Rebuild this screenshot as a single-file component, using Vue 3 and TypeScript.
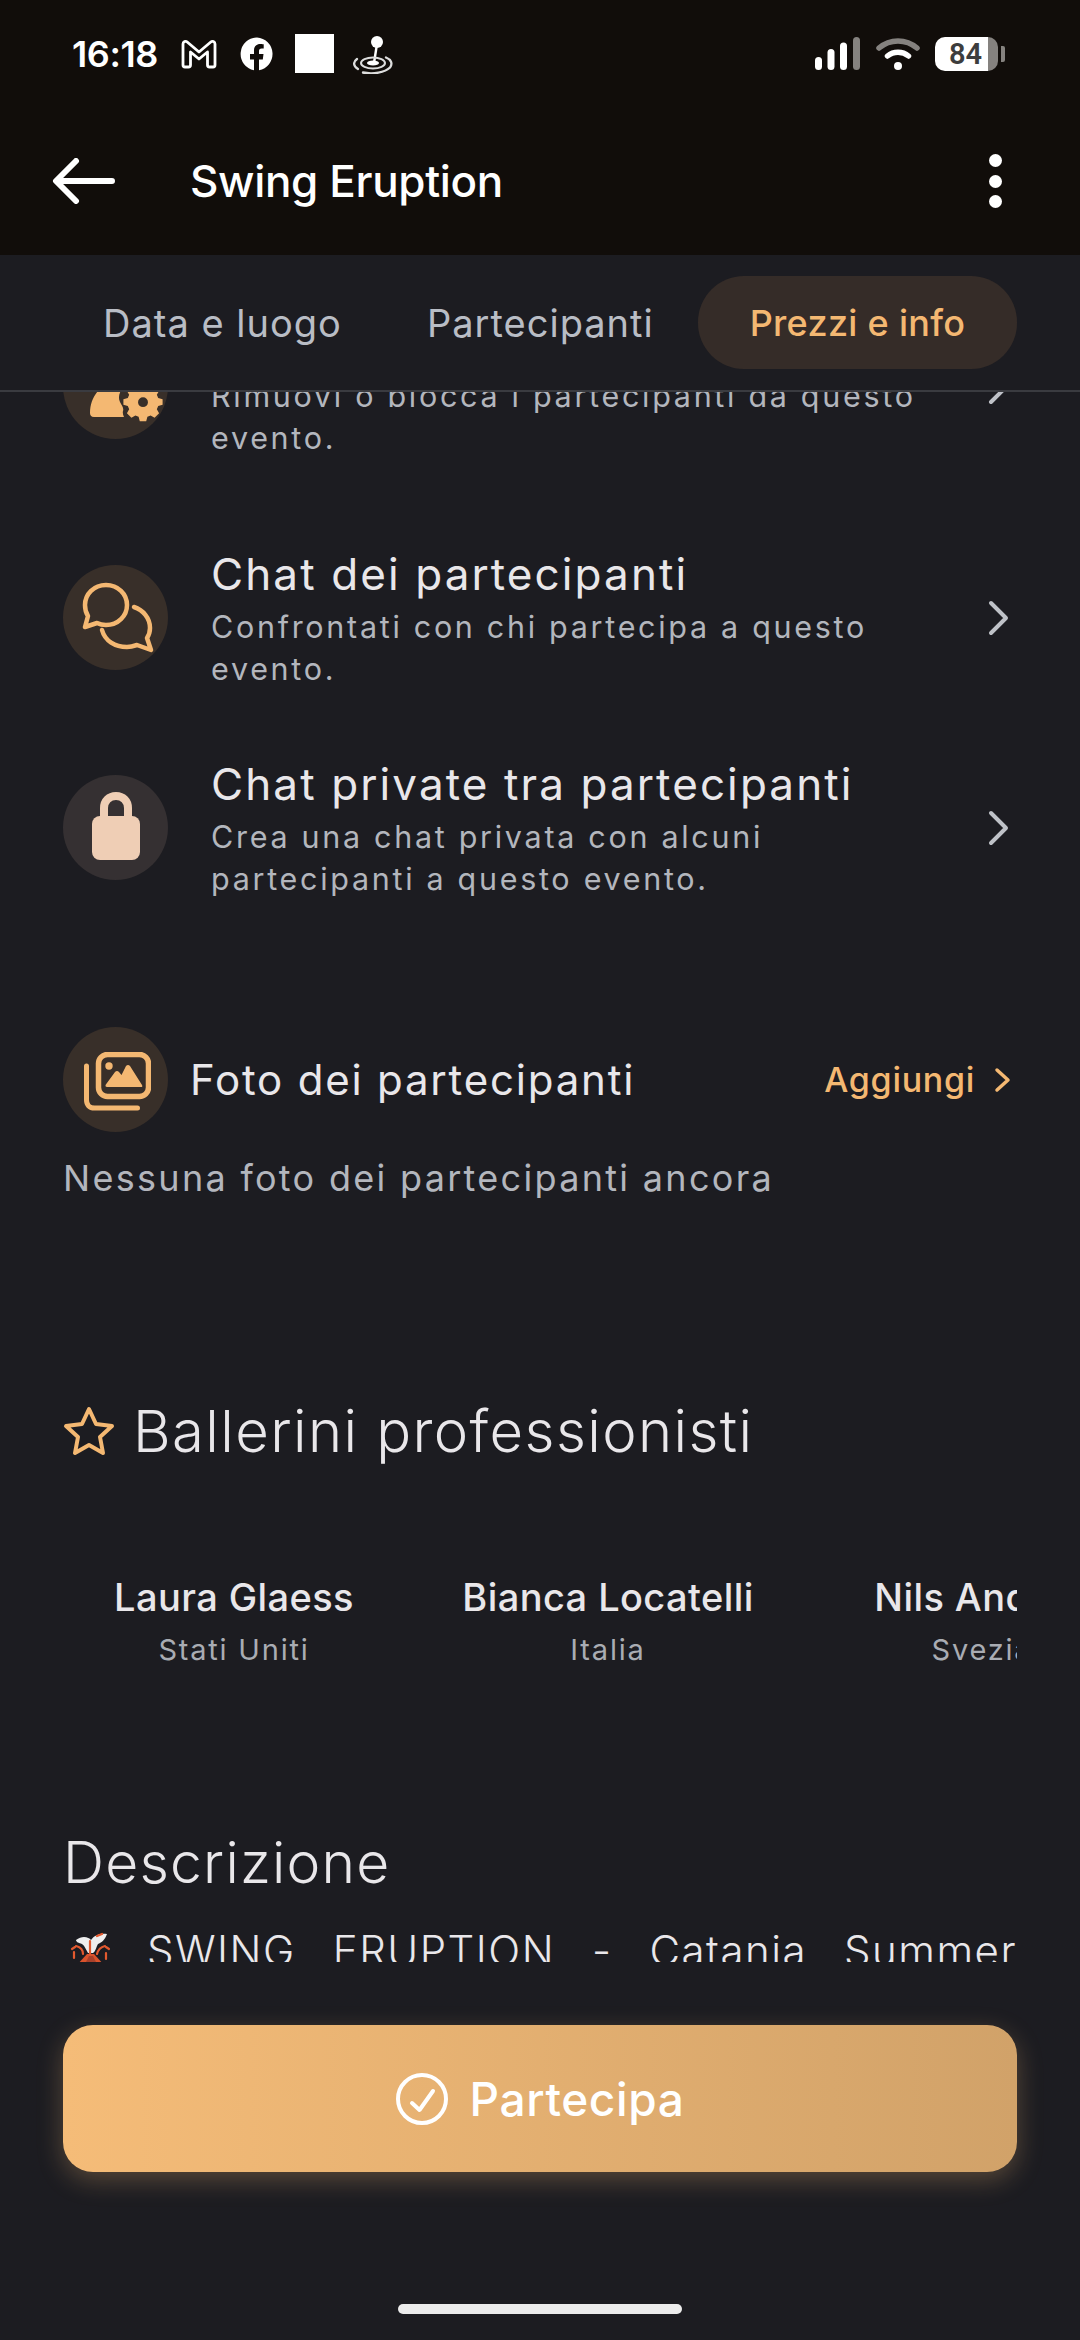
<script setup lang="ts">
interface Row { title: string; sub: string; kind: string }
const rows: Row[] = [
  { title: 'Chat dei partecipanti', sub: 'Confrontati con chi partecipa a questo evento.', kind: 'chat' },
  { title: 'Chat private tra partecipanti', sub: 'Crea una chat privata con alcuni partecipanti a questo evento.', kind: 'lock' }
]
const dancers = [
  { name: 'Laura Glaess', country: 'Stati Uniti' },
  { name: 'Bianca Locatelli', country: 'Italia' },
  { name: 'Nils Andrén', country: 'Svezia' }
]
</script>

<template>
  <div class="page">
    <header class="top">
      <div class="status">
        <span class="time">16:18</span>
        <svg class="si gm" viewBox="0 0 36 30"><path d="M2 26V5c0-2.500 2.600-3.400 4.200-2L18 13 29.800 3c1.600-1.400 4.200-.5 4.200 2v21c0 1-.8 2-2 2h-3.500c-1.200 0-2-1-2-2V13L18 20 9.500 13v13c0 1-.8 2-2 2H4c-1.200 0-2-1-2-2Z" fill="none" stroke="#fff" stroke-width="2.800" stroke-linejoin="round"/></svg>
        <svg class="si fb" viewBox="0 0 34 34"><path fill="#fff" d="M17 .5a16.500 16.500 0 0 0-3 32.700V22.500h-4v-5.500h4v-3.500c0-4.300 2.500-6.600 6.300-6.600 1.800 0 3.400.3 3.400.3v4.300h-2c-2 0-2.700 1.200-2.700 2.500v3h4.500l-.7 5.500h-3.800v10.700A16.500 16.500 0 0 0 17 .5Z"/></svg>
        <span class="sq"></span>
        <svg class="si joy" viewBox="0 0 40 40"><circle cx="24" cy="8" r="6" fill="#fff"/><path d="M23.500 13 21 29" stroke="#fff" stroke-width="2.400"/><ellipse cx="20" cy="29" rx="6" ry="2.600" fill="#fff"/><ellipse cx="20" cy="29" rx="12" ry="5.500" fill="none" stroke="#ddd" stroke-width="2"/><path d="M5 35c-5-3-5-7-1-10M10 38.500c10 2 22 0 27-5 3-4 1-8-4-10" fill="none" stroke="#ddd" stroke-width="2.300" stroke-linecap="round"/></svg>
        <span class="spacer"></span>
        <svg class="signal" viewBox="0 0 45 33">
          <rect x="0" y="20" width="7" height="13" rx="3.500" fill="#fff"/>
          <rect x="12.500" y="12" width="7" height="21" rx="3.500" fill="#fff"/>
          <rect x="25" y="5.500" width="7" height="27.500" rx="3.500" fill="#fff"/>
          <rect x="38" y="0" width="7" height="33" rx="3.500" fill="#85827f"/>
        </svg>
        <svg class="wifi" viewBox="0 0 44 33">
          <path d="M3 11C14 1.500 30 1.500 41 11" fill="none" stroke="#85827f" stroke-width="5.500" stroke-linecap="round"/>
          <path d="M11.500 19C17.500 14 26.500 14 32.500 19" fill="none" stroke="#fff" stroke-width="5.500" stroke-linecap="round"/>
          <circle cx="22" cy="29" r="4" fill="#fff"/>
        </svg>
        <div class="batt"><span class="batt-n">84</span></div>
        <span class="batt-tip"></span>
      </div>
      <div class="bar">
        <svg class="back" viewBox="0 0 63 46"><path d="M60 23H5M24 3 4 23l20 20" fill="none" stroke="#fff" stroke-width="6" stroke-linecap="round" stroke-linejoin="round"/></svg>
        <span class="bar-title">Swing Eruption</span>
        <span class="dots"><i></i><i></i><i></i></span>
      </div>
    </header>

    <nav class="tabs">
      <span class="tab t1">Data e luogo</span>
      <span class="tab t2">Partecipanti</span>
      <span class="tab on">Prezzi e info</span>
    </nav>

    <main class="scroll">
      <div class="content">
        <section class="row first">
          <span class="circle">
            <svg class="full" viewBox="0 0 105 105">
              <path fill="#f4b872" d="M31 83c-3 0-4-2-4-4 0-14 8-26 20-30h14l-2 6c-3 4-4 9-2 13 2 4 4 6 3 9-.5 2 0 4 1 6Z"/>
              <path fill="#f4b872" fill-rule="evenodd" d="M76 47h8l1.500 5.500 4 1.700 5-2.800 5.600 5.600-2.800 5 1.700 4 5.500 1.500v7l-5.500 1.500-1.700 4 2.800 5-5.600 5.600-5-2.800-4 1.700L84 95h-8l-1.500-5.500-4-1.700-5 2.800-5.600-5.600 2.800-5-1.700-4-5.500-1.500v-7l5.500-1.500 1.700-4-2.800-5 5.600-5.600 5 2.800 4-1.700ZM80 65a6.200 6.200 0 1 0 0 12.400A6.200 6.200 0 0 0 80 65Z" transform="translate(80 68) scale(.8) translate(-80 -71)"/>
            </svg>
          </span>
          <div class="texts">
            <div class="r-title">Gestisci partecipanti</div>
            <div class="r-sub">Rimuovi o blocca i partecipanti da questo evento.</div>
          </div>
          <svg class="chev" viewBox="0 0 24 36"><path d="m4 3 15 15L4 33" fill="none" stroke="#bfc2c8" stroke-width="4" stroke-linecap="round" stroke-linejoin="round"/></svg>
        </section>

        <section v-for="r in rows" :key="r.kind" class="row" :class="r.kind">
          <span class="circle" :class="{ grey: r.kind === 'lock' }">
            <svg v-if="r.kind === 'chat'" class="chat-ic" viewBox="0 0 72 72"><path d="M24 3c12 0 21 9 21 20s-9 20-21 20c-4 0-7-1-9-2L3 45l3-11c-2-3-3-7-3-11C3 12 12 3 24 3Z" fill="none" stroke="#f4b872" stroke-width="4.500" stroke-linejoin="round"/><path d="M52 25c9 3 16 11 16 21 0 4-1 7-3 10l4 12-14-5c-3 1-6 2-10 2-12 0-22-6-25-17" fill="none" stroke="#f4b872" stroke-width="4.500" stroke-linejoin="round" stroke-linecap="round"/></svg>
            <svg v-else class="lock-ic" viewBox="0 0 48 68"><path d="M12 28V16C12 9 17 4 24 4s12 5 12 12v12" fill="none" stroke="#efceb5" stroke-width="8"/><rect x="0" y="24" width="48" height="44" rx="8" fill="#efceb5"/></svg>
          </span>
          <div class="texts">
            <div class="r-title">{{ r.title }}</div>
            <div class="r-sub">{{ r.sub }}</div>
          </div>
          <svg class="chev" viewBox="0 0 24 36"><path d="m4 3 15 15L4 33" fill="none" stroke="#bfc2c8" stroke-width="4" stroke-linecap="round" stroke-linejoin="round"/></svg>
        </section>

        <section class="photos">
          <span class="circle">
            <svg class="pic-ic" viewBox="0 0 67 59">
              <rect x="14.500" y="2.500" width="50" height="42" rx="9" fill="none" stroke="#f4b872" stroke-width="5.500"/>
              <circle cx="25" cy="14" r="3.700" fill="#f4b872"/>
              <path fill="#f4b872" d="M21.500 33 31 20q2-2 4 0l2.500 3L42 14q2-2 4 0l12 19q1 2-1 2H23q-2 0-1.500-2Z"/>
              <path d="M2.500 14v34c0 5 3 8 8 8h43" fill="none" stroke="#f4b872" stroke-width="5" stroke-linecap="round"/>
            </svg>
          </span>
          <span class="p-title">Foto dei partecipanti</span>
          <span class="add">Aggiungi</span>
          <svg class="add-chev" viewBox="0 0 18 26"><path d="m3 3 11 10L3 23" fill="none" stroke="#f4b872" stroke-width="3.500" stroke-linecap="round" stroke-linejoin="round"/></svg>
        </section>
        <p class="none">Nessuna foto dei partecipanti ancora</p>

        <h2 class="pro">
          <svg class="star" viewBox="0 0 52 50"><path d="m26 3 7 15 16 2-12 11 3 16-14-8-14 8 3-16L3 20l16-2Z" fill="none" stroke="#f4b872" stroke-width="4" stroke-linejoin="round"/></svg>
          Ballerini professionisti
        </h2>
        <div class="dancers">
          <div v-for="d in dancers" :key="d.name" class="dancer">
            <div class="d-name">{{ d.name }}</div>
            <div class="d-country">{{ d.country }}</div>
          </div>
        </div>

        <h2 class="desc">Descrizione</h2>
        <p class="desc-text">
          <span class="desc-line">
            <svg class="volcano" viewBox="0 0 40 48">
              <path d="M6 34 17 22h7l11 12Z" fill="#d9522c"/>
              <path d="M14 34 19 24h4l5 10Z" fill="#a8402a"/>
              <path d="M6 8C12 3 19 5 21 8c4-6 11-7 16-6-2 6-6 9-9 10-2 3-2 7-5 9h-5c-2-3-3-7-6-9-3-1-6-2-6-4Z" fill="#eeeeee"/>
              <path d="M20 22V9M13 22c0-4-3-7-7-8M27 22c1-4 4-7 8-8M5 15 2 17M36 15l3 2M4 20v6M36 21v6M27 4l5-2" fill="none" stroke="#e2592f" stroke-width="2.200" stroke-linecap="round"/>
            </svg>
            SWING ERUPTION - Catania Summer
          </span>
          Edition è il festival di swing che torna a far ballare la Sicilia.
        </p>
      </div>
    </main>

    <footer class="foot">
      <button class="cta">
        <svg class="chk" viewBox="0 0 52 52"><circle cx="26" cy="26" r="24" fill="none" stroke="#fff" stroke-width="4"/><path d="m16 30 7.500 7L37 18" fill="none" stroke="#fff" stroke-width="4" stroke-linecap="round" stroke-linejoin="round"/></svg>
        Partecipa
      </button>
      <span class="home"></span>
    </footer>
  </div>
</template>

<style>
html, body { margin: 0; background: #1c1c21; }
</style>

<style scoped>
.page {
  width: 1080px; height: 2340px; display: flex; flex-direction: column;
  background: #1c1c21; overflow: hidden;
  font-family: "Inter", "Noto Sans", sans-serif; color: #e9e7ea;
}
.top { height: 255px; background: #110d0a; flex: none; }
.status { height: 107px; display: flex; align-items: center; padding: 0 75px 0 72px; box-sizing: border-box; }
.time { font-size: 36px; font-weight: 600; color: #fff; letter-spacing: -.4px; width: 88px; margin-right: 21px; }
.si { flex: none; }
.gm { width: 36px; height: 30px; }
.fb { width: 34px; height: 34px; margin-left: 23px; }
.sq { width: 39px; height: 39px; background: #fff; margin-left: 21px; flex: none; }
.joy { width: 40px; height: 40px; margin-left: 19px; }
.spacer { flex: 1; }
.signal { width: 45px; height: 33px; }
.wifi { width: 44px; height: 33px; margin-left: 16px; }
.batt {
  width: 63px; height: 34px; border-radius: 10px; margin-left: 15px;
  background: linear-gradient(90deg, #fff 0 84%, #85827f 84%);
  display: flex; align-items: center; justify-content: center;
}
.batt-n { font-size: 29px; font-weight: 600; color: #3d3d3d; font-family: "Roboto", sans-serif; margin-right: 2px; }
.batt-tip { width: 4px; height: 16px; background: #85827f; border-radius: 0 2px 2px 0; margin-left: 3px; }
.bar { height: 148px; display: flex; align-items: center; padding: 0 78px 0 52px; box-sizing: border-box; }
.back { width: 63px; height: 46px; flex: none; }
.bar-title { font-size: 44px; font-weight: 500; color: #fff; margin-left: 75px; letter-spacing: -.35px; flex: 1; }
.dots { display: flex; flex-direction: column; gap: 7.500px; }
.dots i { display: block; width: 13px; height: 13px; border-radius: 50%; background: #fff; }

.tabs {
  height: 137px; flex: none; display: flex; align-items: center; box-sizing: border-box;
  border-bottom: 2px solid #3a3b40; padding: 0 63px 0 103px; background: #1c1c21;
  position: relative; z-index: 2;
}
.tab { font-size: 38px; letter-spacing: 1px; color: #b9bdc5; font-weight: 400; white-space: nowrap; }
.t1 { width: 324px; }
.t2 { width: 271px; }
.on {
  width: 319px; height: 93px; border-radius: 46px; background: #352c28; color: #f4b872; font-weight: 500;
  font-size: 36px; letter-spacing: .3px;
  display: flex; align-items: center; justify-content: center;
}

.scroll { height: 1570px; flex: none; overflow: hidden; }
.content { padding: 0 63px; margin-top: -78px; }
.row { display: flex; align-items: center; height: 145px; }
.first { margin-bottom: 86px; }
.chat { margin-bottom: 65px; }
.circle {
  width: 105px; height: 105px; border-radius: 50%; background: #382f29; flex: none;
  display: flex; align-items: center; justify-content: center;
}
.circle.grey { background: #353032; }
.full { width: 105px; height: 105px; display: block; }
.chat-ic { width: 72px; height: 72px; margin: 1px 0 0 5px; }
.lock-ic { width: 48px; height: 68px; margin-top: -4px; }
.pic-ic { width: 67px; height: 59px; margin: 4px 0 0 4px; }
.texts { flex: 1; margin-left: 43px; min-width: 0; padding-top: 3px; }
.r-title { font-size: 44px; line-height: 50px; letter-spacing: 2.100px; color: #e9e7ea; font-weight: 400; white-space: nowrap; }
.r-sub { font-size: 30.500px; line-height: 42px; margin-top: 7px; letter-spacing: 2.700px; color: #b3b6bd; width: 720px; }
.chev { width: 24px; height: 36px; flex: none; margin-right: 6px; }
.photos { display: flex; align-items: center; height: 105px; margin-top: 127px; }
.p-title { font-size: 42px; color: #e9e7ea; margin-left: 22px; flex: 1; letter-spacing: 1.800px; }
.add { font-size: 34px; letter-spacing: .7px; color: #f4b872; font-weight: 500; }
.add-chev { width: 18px; height: 26px; margin-left: 19px; margin-right: 5px; flex: none; }
.none { margin: 24px 0 0; font-size: 36px; line-height: 44px; color: #b3b6bd; letter-spacing: 2.300px; }
.pro {
  margin: 197px 0 0; font-size: 58px; line-height: 68px; font-weight: 300; color: #e9e7ea; letter-spacing: 1.400px;
  display: flex; align-items: center; gap: 18px;
}
.star { width: 52px; height: 50px; flex: none; }
.dancers { display: flex; margin-top: 108px; overflow: hidden; width: 954px; }
.dancer { width: 374px; flex: none; text-align: center; }
.dancer:first-child { margin-left: -16px; }
.d-name { font-size: 38px; line-height: 48px; font-weight: 500; color: #e9e7ea; white-space: nowrap; letter-spacing: .4px; }
.d-country { font-size: 29px; line-height: 40px; margin-top: 9px; color: #a9acb3; letter-spacing: 1.800px; white-space: nowrap; }
.desc { margin: 159px 0 0; font-size: 57px; line-height: 68px; font-weight: 300; color: #e9e7ea; letter-spacing: 1.200px; }
.desc-text { margin: 28px 0 0; font-size: 42px; line-height: 52px; letter-spacing: 1.500px; color: #e9e7ea; font-weight: 300; }
.desc-line { display: block; text-align: justify; text-align-last: justify; }
.volcano { width: 40px; height: 48px; vertical-align: -14px; margin: 0 0 0 7px; }
.foot { flex: 1; padding: 63px 63px 0; background: #1c1c21; display: flex; flex-direction: column; align-items: center; }
.cta {
  width: 954px; height: 147px; border: 0; border-radius: 30px; flex: none;
  background: linear-gradient(90deg, #f5bc78, #d1a269);
  box-shadow: 0 8px 26px rgba(245, 188, 120, .28);
  color: #fff; font-family: inherit; font-size: 46px; font-weight: 500; letter-spacing: .6px;
  display: flex; align-items: center; justify-content: center; gap: 22px;
}
.chk { width: 52px; height: 52px; flex: none; }
.home { width: 284px; height: 10px; border-radius: 5px; background: #ececec; margin-top: 132px; flex: none; }
</style>
